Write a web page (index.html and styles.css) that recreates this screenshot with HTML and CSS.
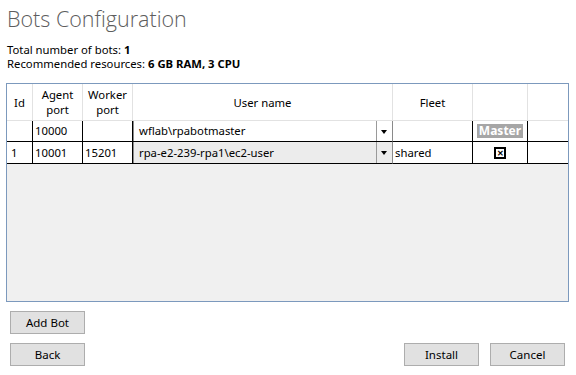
FILE: index.html
```html
<!DOCTYPE html>
<html lang="en">
<head>
  <meta charset="UTF-8" />
  <title>Bots Configuration</title>
  <link rel="stylesheet" href="styles.css">
</head>
<body>
  <div class="page">
    <h1 class="title">Bots Configuration</h1>
    <div class="summary">
      <div>Total number of bots: <b>1</b></div>
      <div>Recommended resources: <b>6 GB RAM, 3 CPU</b></div>
    </div>

    <div class="grid">
      <div class="row head">
        <div class="cell c-id">Id</div>
        <div class="cell c-agent">Agent<br>port</div>
        <div class="cell c-worker">Worker<br>port</div>
        <div class="cell c-user">User name</div>
        <div class="cell c-fleet">Fleet</div>
        <div class="cell c-master"></div>
        <div class="cell c-rest"></div>
      </div>

      <div class="row data first">
        <div class="cell c-id"></div>
        <div class="cell c-agent">10000</div>
        <div class="cell c-worker"></div>
        <div class="cell c-user">
          <div class="combo">
            <span class="combo-text">wflab\rpabotmaster</span>
            <span class="combo-arrow"></span>
          </div>
        </div>
        <div class="cell c-fleet"></div>
        <div class="cell c-master"><span class="master-tag">Master</span></div>
        <div class="cell c-rest"></div>
      </div>

      <div class="row data">
        <div class="cell c-id">1</div>
        <div class="cell c-agent">10001</div>
        <div class="cell c-worker">15201</div>
        <div class="cell c-user">
          <div class="combo disabled">
            <span class="combo-text">rpa-e2-239-rpa1\ec2-user</span>
            <span class="combo-arrow"></span>
          </div>
        </div>
        <div class="cell c-fleet">shared</div>
        <div class="cell c-master"><span class="check">&#x2715;</span></div>
        <div class="cell c-rest"></div>
      </div>
    </div>

    <div class="actions">
      <button class="btn">Add Bot</button>
      <div class="bottom-bar">
        <button class="btn">Back</button>
        <div class="right-buttons">
          <button class="btn">Install</button>
          <button class="btn">Cancel</button>
        </div>
      </div>
    </div>
  </div>
</body>
</html>
```

FILE: styles.css
```css
body {
  margin: 0;
  font-family: "Noto Sans", "Open Sans", sans-serif;
  font-size: 11.3px;
  color: #000;
  background: #fff;
}

.page {
  padding: 4px 7px 0 6px;
}

.title {
  margin: 0 0 0 1px;
  font-family: "Open Sans", sans-serif;
  font-weight: 300;
  font-size: 21.5px;
  line-height: 30px;
  color: #5d5d5d;
}

.summary {
  margin: 9px 0 0 1px;
  line-height: 14px;
}

/* Grid */
.grid {
  margin-top: 12px;
  width: 561px;
  height: 217px;
  border: 1px solid #7c99bd;
  background: #f0f0f0;
}

.row {
  display: flex;
  background: #fff;
}

.cell {
  box-sizing: border-box;
  flex: none;
  border-right: 1px solid #000;
  border-bottom: 1px solid #000;
  padding: 0 4px;
  white-space: nowrap;
  overflow: hidden;
}

.head .cell {
  height: 37px;
  border-color: #e2e2e2;
  display: flex;
  align-items: center;
  justify-content: center;
  text-align: center;
  line-height: 15px;
  padding: 0;
}

.data .cell {
  height: 22px;
  line-height: 21px;
  padding: 0 2px;
}

.data.first .cell {
  height: 21px;
  line-height: 20px;
}

.c-id { width: 26px; }
.c-agent { width: 50px; }
.c-worker { width: 50px; }
.c-user { width: 260px; }
.c-fleet { width: 80px; }
.c-master { width: 55px; }
.c-rest { flex: 1 1 auto; border-right: none; }

.data .c-id { padding-left: 4px; }

.data .c-user {
  padding: 0;
  border-right-color: #8a8a8a;
}

.combo {
  display: flex;
  height: 100%;
  box-sizing: border-box;
  border-left: 1px solid #8a8a8a;
  background: #fff;
}

.combo.disabled {
  background: #ececec;
}

.combo-text {
  flex: 1;
  padding-left: 5px;
}

.combo-arrow {
  width: 15px;
  border-left: 1px solid #9a9a9a;
  position: relative;
}

.combo-arrow::after {
  content: "";
  position: absolute;
  left: 4px;
  top: 9px;
  border-left: 3.5px solid transparent;
  border-right: 3.5px solid transparent;
  border-top: 4px solid #000;
}

.data .c-master {
  display: flex;
  align-items: center;
  justify-content: center;
}

.master-tag {
  background: #a6a6a6;
  color: #fff;
  font-weight: bold;
  font-size: 12px;
  line-height: 14px;
  padding: 0 2px;
}

.check {
  box-sizing: border-box;
  width: 12px;
  height: 12px;
  border: 2px solid #000;
  font-size: 8px;
  font-weight: bold;
  line-height: 8px;
  text-align: center;
}

/* Buttons */
.actions {
  padding: 9px 0 0 4px;
  display: flex;
  flex-direction: column;
  gap: 9px;
}

.btn {
  width: 75px;
  height: 23px;
  padding: 0;
  font-family: inherit;
  font-size: 11.5px;
  color: #000;
  background: #e1e1e1;
  border: 1px solid #adadad;
  border-radius: 0;
}

.actions > .btn {
  align-self: flex-start;
}

.bottom-bar {
  display: flex;
  justify-content: space-between;
  padding-right: 4px;
}

.right-buttons {
  display: flex;
  gap: 11px;
}
```
